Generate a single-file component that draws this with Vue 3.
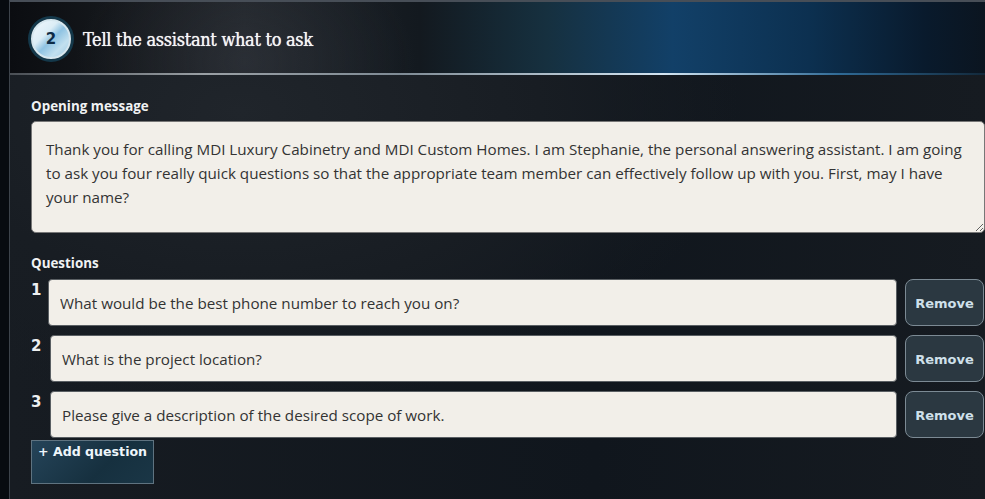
<script setup>
const opening = 'Thank you for calling MDI Luxury Cabinetry and MDI Custom Homes. I am Stephanie, the personal answering assistant. I am going to ask you four really quick questions so that the appropriate team member can effectively follow up with you. First, may I have your name?'
const questions = [
  { n: 1, text: 'What would be the best phone number to reach you on?' },
  { n: 2, text: 'What is the project location?' },
  { n: 3, text: 'Please give a description of the desired scope of work.' }
]
</script>

<template>
  <div class="page">
    <section class="panel">
      <header class="head">
        <div class="badge"><span>2</span></div>
        <h2>Tell the assistant what to ask</h2>
      </header>
      <div class="body">
        <label class="label first">Opening message</label>
        <textarea class="opening" :value="opening" spellcheck="false"></textarea>
        <label class="label second">Questions</label>
        <div class="rows">
          <div v-for="q in questions" :key="q.n" class="row">
            <span class="num">{{ q.n }}</span>
            <input class="q" :value="q.text" spellcheck="false" />
            <button class="remove">Remove</button>
          </div>
        </div>
        <button class="add">+ Add question</button>
      </div>
    </section>
  </div>
</template>

<style>
html, body { margin: 0; background: #0b1016; overflow: hidden; }
</style>

<style scoped>
.page {
  width: 985px;
  height: 499px;
  overflow: hidden;
  padding-left: 9px;
  box-sizing: border-box;
  background: #070b10;
}
.panel {
  height: 499px;
  border-left: 1px solid #3c434b;
  border-top: 2px solid #474e57;
  box-sizing: border-box;
  background: radial-gradient(ellipse 500px 300px at 230px 110px, #20252b 0%, #181d23 60%, transparent 100%),
    linear-gradient(90deg, #171c22, #10161d 60%, #161b21);
}
.head {
  height: 73px;
  display: flex;
  align-items: center;
  gap: 12px;
  padding: 3px 0 0 21px;
  box-sizing: border-box;
  border-bottom: 2px solid transparent;
  border-image: linear-gradient(90deg, #4a4f55 0%, #9aa0a5 20%, #7f8b95 40%, #d3e5f2 67%, #2f6a96 85%, #12283a 100%) 1;
  background:
    radial-gradient(ellipse 170px 120px at 235px 60px, rgba(60,65,75,.3), transparent 100%),
    linear-gradient(90deg, #0b0d11 0%, #14171b 10%, #22262b 24%, #13191f 42%, #16303f 55%, #124068 68%, #0c3050 82%, #091a2c 94%, #0b1520 100%);
}
.badge {
  width: 40px;
  height: 40px;
  border-radius: 50%;
  box-sizing: border-box;
  border: 2px solid #d6e7ef;
  box-shadow: 0 0 0 3px #14384a;
  background: linear-gradient(135deg, #f1f8fc 0%, #dcedf6 35%, #8fc3e2 52%, #c2e0ef 75%, #9fcbe4 100%);
  display: flex;
  align-items: center;
  justify-content: center;
}
.badge span {
  font: bold 15px "DejaVu Sans", sans-serif;
  color: #0f2c46;
}
h2 {
  margin: 0;
  font-family: "DejaVu Serif Condensed", "DejaVu Serif", serif;
  font-stretch: condensed;
  font-weight: 400;
  font-size: 18px;
  letter-spacing: -0.3px;
  color: #f4f5f5;
  text-shadow: 0 0 0.7px #f4f5f5;
}
.body {
  padding: 0 0 0 21px;
}
.label {
  display: block;
  font: 700 13.4px "Open Sans", sans-serif;
  color: #f0f2f3;
  line-height: 18px;
}
.first { padding-top: 22px; }
.second { padding-top: 21px; }
.opening {
  display: block;
  width: 954px;
  height: 112px;
  margin-top: 6px;
  padding: 15px 14px;
  box-sizing: border-box;
  border: 1px solid #777;
  border-radius: 5px;
  background: #f2efe9;
  color: #333;
  font: 400 15.2px/24px "Open Sans", sans-serif;
  outline: none;
}
.rows {
  display: flex;
  flex-direction: column;
  gap: 9px;
  margin-top: 7px;
}
.row {
  display: flex;
  align-items: flex-start;
  width: 953px;
  height: 47px;
}
.num {
  font: 700 15px/22px "DejaVu Sans", sans-serif;
  color: #eef0f1;
  flex: none;
  width: 10px;
  margin-right: 9px;
}
.row:first-child .num { margin-right: 7px; }
.q {
  flex: 1;
  min-width: 0;
  height: 47px;
  padding: 0 11px;
  box-sizing: border-box;
  border: 1px solid #5a5f63;
  border-radius: 4px;
  background: #f2efe9;
  color: #333;
  font: 400 15.2px "Open Sans", sans-serif;
  outline: none;
}
.remove {
  flex: none;
  width: 79px;
  height: 47px;
  margin-left: 8px;
  border: 1px solid #7c8a94;
  border-radius: 8px;
  background: #2b3841;
  color: #cfe0ea;
  font: 700 13px "DejaVu Sans", sans-serif;
  padding: 2px 0 0;
}
.add {
  display: flex;
  align-items: flex-start;
  width: 123px;
  height: 44px;
  margin-top: 2px;
  padding: 3px 0 0 6px;
  box-sizing: border-box;
  text-align: left;
  border: 1px solid #5f7380;
  background: linear-gradient(135deg, #254459, #16303f 60%, #1a3646);
  color: #eef6fb;
  font: 700 12.6px/16px "DejaVu Sans", sans-serif;
}
</style>
